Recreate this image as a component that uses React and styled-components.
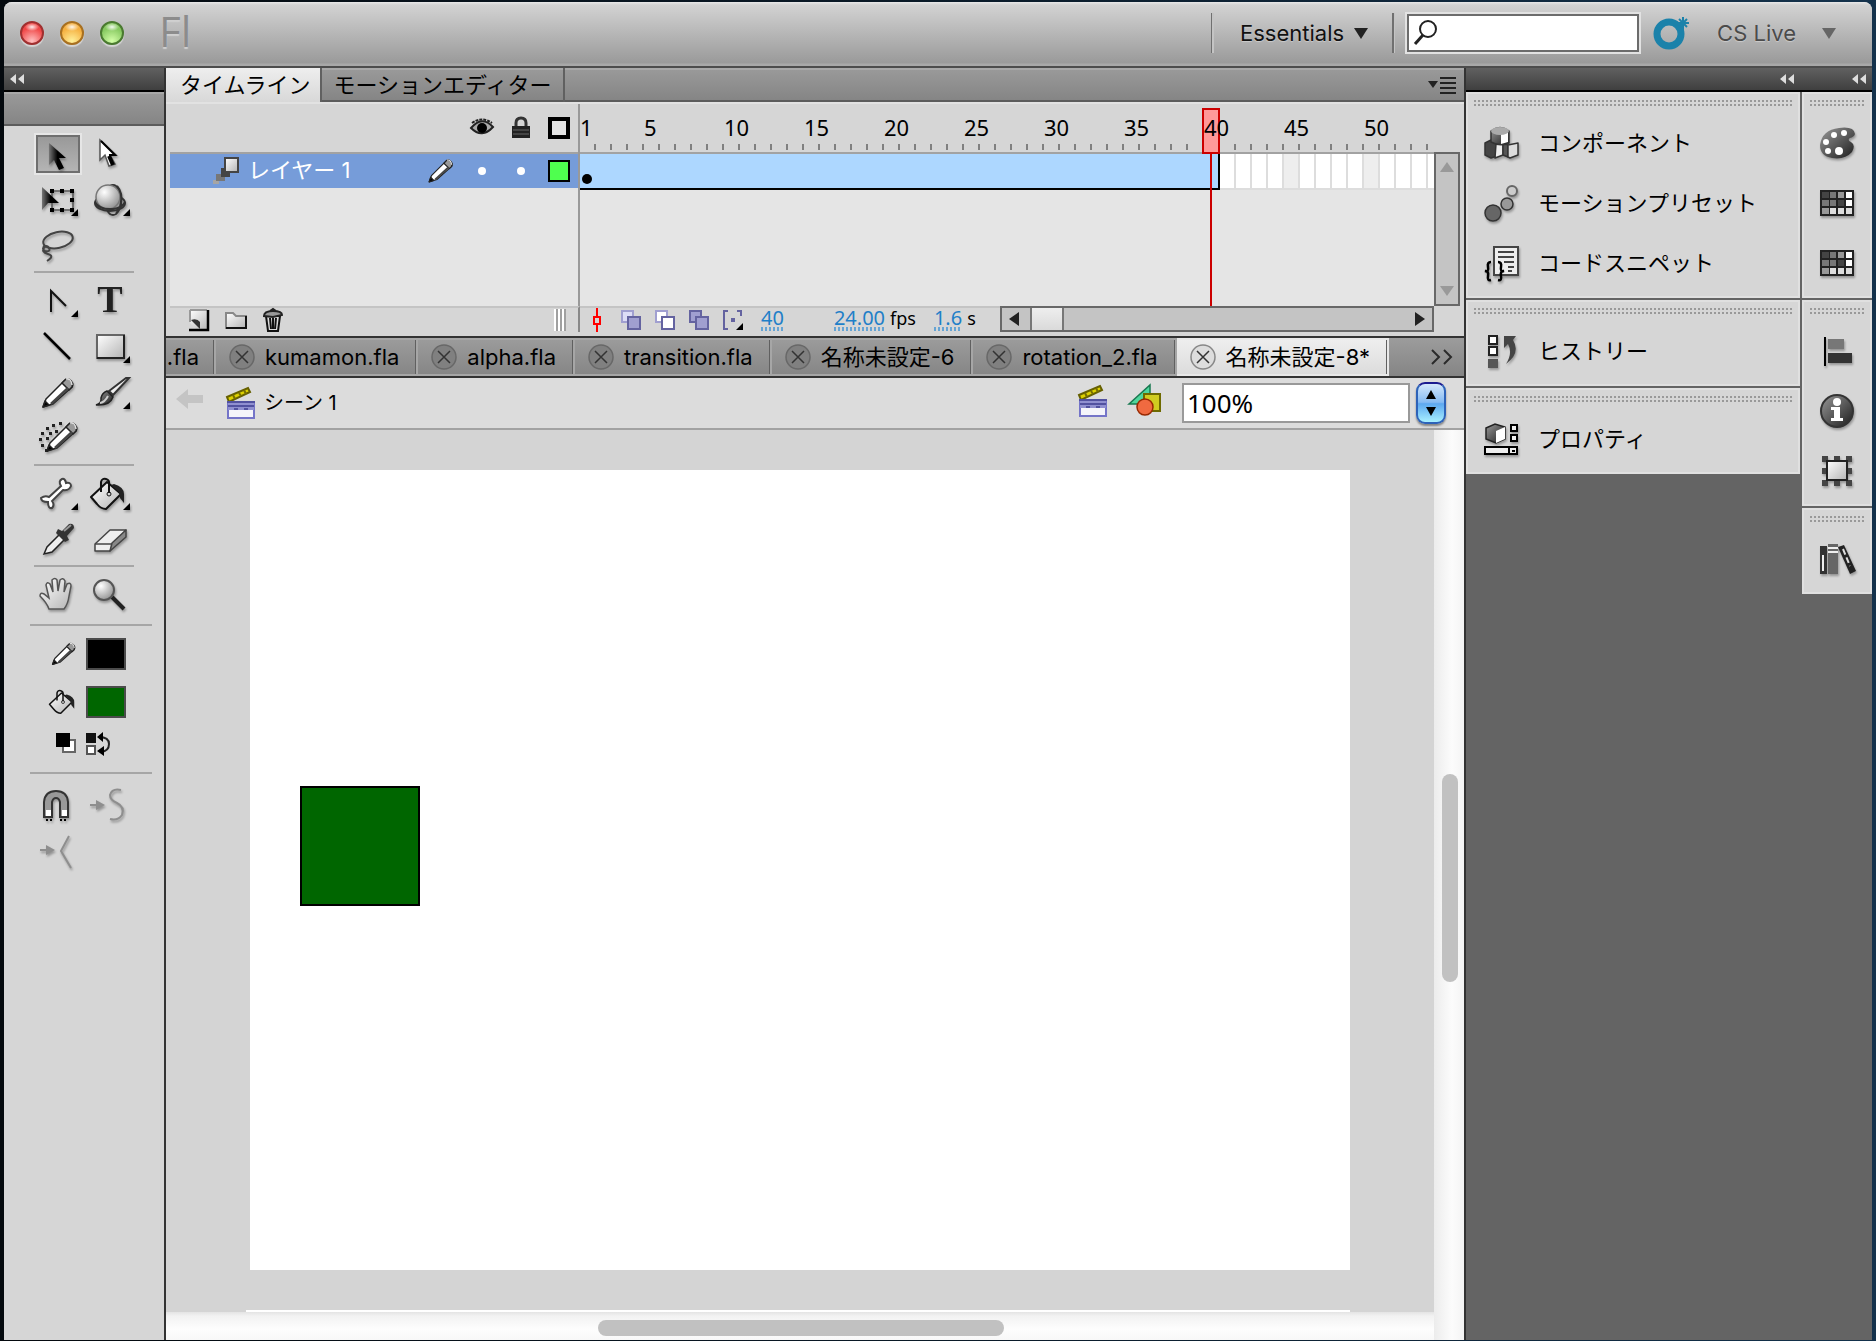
import { useState } from 'react'
import styled, { createGlobalStyle, css } from 'styled-components'

const GlobalStyle = createGlobalStyle`
  * {
    box-sizing: border-box;
  }

  body {
    margin: 0;
    background: #0a1a28;
    color: #000;
    font-family: Inter, 'Noto Sans CJK JP', sans-serif;
    font-size: 22px;
    line-height: 28px;
  }

  button, input {
    margin: 0;
    padding: 0;
    border: 0;
    border-radius: 0;
    background: none;
    color: inherit;
    font: inherit;
  }

  svg {
    display: block;
    flex: none;
    overflow: visible;
  }
`

const Desktop = styled.div`
  min-height: 100vh;
  display: flex;
  padding: 2px 4px 1px;
  background: linear-gradient(90deg, #04090e 0%, #0a1a28 50%, #14324c 100%);
`

const Window = styled.div`
  flex: 1;
  min-width: 0;
  display: flex;
  flex-direction: column;
  border-radius: 8px 8px 0 0;
  overflow: hidden;
  background: #d6d6d6;
`

/* title bar */

const TitleBar = styled.header`
  height: 66px;
  display: flex;
  align-items: center;
  padding: 0 36px 2px 16px;
  border-bottom: 2px solid #4c4c4c;
  background: linear-gradient(#e8e8e8 0, #d2d2d2 3px, #9a9a9a 61px, #a8a8a8 62px);
`

const Lights = styled.div`
  display: flex;
  gap: 16px;
`

const Light = styled.button`
  width: 24px;
  height: 24px;
  border-radius: 50%;
  border: 2px solid ${(p) => p.$edge};
  background:
    radial-gradient(ellipse 7px 4px at 50% 4px, rgba(255, 255, 255, 0.9), transparent),
    radial-gradient(circle at 50% 90%, ${(p) => p.$glow}, ${(p) => p.$color} 65%);
  box-shadow: 0 2px 1px rgba(255, 255, 255, 0.5);
`

const Logo = styled.div`
  margin-left: 35px;
  padding-bottom: 4px;
  flex: 1;
  color: #8c8c8c;
  font-family: 'Open Sans', sans-serif;
  font-size: 42px;
  line-height: 48px;
  text-shadow: 0 2px 1px #d0d0d0;
`

const Rule = styled.span`
  width: 3px;
  height: 40px;
  background: linear-gradient(90deg, #707070 50%, #c4c4c4 50%);
`

const MenuButton = styled.button`
  display: flex;
  align-items: center;
  gap: ${(p) => p.$gap || 10}px;
  color: ${(p) => (p.$dim ? '#4b4b4b' : '#111')};
  text-shadow: 0 1px 1px #ccc;
`

const Essentials = styled(MenuButton)`
  padding: 0 24px 0 26px;
`

const Search = styled.label`
  display: flex;
  align-items: center;
  width: 232px;
  height: 38px;
  margin: 0 14px 0 12px;
  padding-left: 4px;
  border: 2px solid #6c6c6c;
  outline: 2px solid #e2e2e2;
  background: #fff;

  input {
    min-width: 0;
    flex: 1;
    height: 28px;
    outline: 0;
  }
`

/* main columns */

const Columns = styled.div`
  flex: 1;
  display: flex;
  min-height: 0;
`

const DarkHead = styled.div`
  height: 24px;
  display: flex;
  align-items: center;
  border-bottom: 2px solid #000;
  background: linear-gradient(#606060, #3f3f3f);
`

const Collapse = styled.button`
  padding: 0 6px;
`

const ToolPanel = styled.aside`
  width: 162px;
  display: flex;
  flex-direction: column;
  border-right: 2px solid #333;
`

const ToolCap = styled.div`
  height: 34px;
  border-top: 2px solid #a8a8a8;
  border-bottom: 2px solid #5c5c5c;
  background: linear-gradient(#999, #858585);
`

const ToolGroup = styled.div`
  width: 104px;
  margin-left: 27px;
  padding: 5px 0 2px;
  display: grid;
  grid-template-columns: 52px 52px;
  grid-auto-rows: 46px;
`

const ToolRule = styled.hr`
  width: ${(p) => (p.$wide ? 122 : 100)}px;
  height: 2px;
  margin: ${(p) => (p.$wide ? '4px 0 4px 26px' : '0 0 0 30px')};
  border: 0;
  background: #a6a6a6;
`

const Tool = styled.button`
  display: grid;
  place-items: center;

  svg {
    filter: drop-shadow(1px 2px 1px rgba(0, 0, 0, 0.3));
  }

  ${(p) =>
    p.$active &&
    css`
      width: 44px;
      height: 38px;
      margin: 4px 0 0 5px;
      place-self: start;
      border: 2px solid #6f6f6f;
      outline: 2px solid #e6e6e6;
      background: linear-gradient(#999, #b4b4b4);
    `}
`

const ColorGroup = styled.div`
  padding: 0 0 6px 36px;
`

const ColorRow = styled.div`
  display: flex;
  align-items: center;
  gap: ${(p) => p.$gap}px;
  height: ${(p) => p.$height}px;
  padding-left: ${(p) => p.$indent || 0}px;
`

const Swatch = styled.button`
  width: 40px;
  height: 32px;
  border: 2px solid #4b4b4b;
  background: ${(p) => p.$color};
`

/* timeline */

const Center = styled.main`
  flex: 1;
  min-width: 0;
  display: flex;
  flex-direction: column;
`

const PanelTabs = styled.div`
  height: 34px;
  display: flex;
  align-items: center;
  border-top: 2px solid #a8a8a8;
  border-bottom: 2px solid #5c5c5c;
  background: linear-gradient(#999, #858585);
`

const PanelTab = styled.button`
  height: 34px;
  padding: 0 11px;
  border-right: 2px solid #606060;
  white-space: nowrap;
  ${(p) =>
    p.$active &&
    css`
      padding: 0 10px 0 14px;
      background: linear-gradient(#eee, #d8d8d8);
    `}
`

const PanelMenu = styled.button`
  margin-left: auto;
  padding-right: 8px;
`

const Timeline = styled.section`
  display: flex;
  padding: 0 4px;
  height: 204px;
  border-top: 2px solid #e2e2e2;
`

const Layers = styled.div`
  width: 410px;
  border-right: 2px solid #999;
`

const layerGrid = css`
  display: grid;
  grid-template-columns: 1fr 38px 39px 38px;
  align-items: center;
  justify-items: center;
`

const LayerHead = styled.div`
  ${layerGrid}
  height: 50px;
  border-bottom: 2px solid #a2a2a2;
`

const LayerRow = styled.div`
  ${layerGrid}
  height: 34px;
  background: #769cd9;
  color: #fff;
`

const LayerName = styled.div`
  justify-self: stretch;
  display: flex;
  align-items: center;
  padding: 0 8px 0 42px;

  span {
    flex: 1;
    margin-left: 8px;
    padding-bottom: 2px;
  }
`

const Dot = styled.button`
  width: 8px;
  height: 8px;
  border-radius: 50%;
  background: #fff;
`

const Outline = styled.button`
  width: 22px;
  height: 22px;
  border: ${(p) => p.$line}px solid #000;
  background: ${(p) => p.$color};
`

const Empty = styled.div`
  height: 118px;
  background: #e5e5e5;
`

const Frames = styled.div`
  flex: 1;
  min-width: 0;
  position: relative;
  overflow: hidden;
`

const Ruler = styled.div`
  display: flex;
  height: 50px;
  border-bottom: 2px solid #a2a2a2;
`

const Tick = styled.div`
  flex: none;
  width: 16px;
  padding-top: 9px;
  font-family: 'Noto Sans', sans-serif;
  background: linear-gradient(#808080, #808080) 14px 40px / 2px 6px no-repeat;

  /* numbers stay readable above the playhead */
  span {
    position: relative;
    z-index: 1;
  }
`

const FrameRow = styled.div`
  display: flex;
  height: 36px;
  background: #fff;
`

const Span = styled.div`
  flex: none;
  display: flex;
  align-items: flex-end;
  width: ${(p) => p.$length * 16}px;
  padding: 0 2px 4px;
  border-right: 2px solid #000;
  border-bottom: 2px solid #000;
  background: #add7ff;

  &::before {
    content: '';
    width: 10px;
    height: 10px;
    border-radius: 50%;
    background: #000;
  }
`

const Frame = styled.div`
  flex: none;
  width: 16px;
  border-right: 2px solid #ddd;
  border-bottom: 2px solid #ddd;
  background: ${(p) => (p.$fifth ? '#eee' : '#fff')};
`

/* the playhead lies over the ruler and the frames */
const Playhead = styled.div`
  position: absolute;
  top: 4px;
  bottom: 0;
  left: ${(p) => (p.$frame - 1) * 16 - 2}px;
  width: 18px;
  background: linear-gradient(#c00, #c00) 8px 0 / 2px 100% no-repeat;

  &::before {
    content: '';
    display: block;
    height: 42px;
    border: 2px solid #c00;
    background: #f99;
  }
`

const FrameScroll = styled.div`
  align-self: flex-end;
  width: 26px;
  height: 154px;
  display: flex;
  flex-direction: column;
  justify-content: space-between;
  align-items: center;
  padding: 8px 0;
  border: 2px solid #686868;
  background: #c4c4c4;
`

const TimelineBar = styled.footer`
  height: 32px;
  display: flex;
  padding: 0 30px 4px 4px;
  border-bottom: 2px solid #333;
`

const LayerTools = styled.div`
  width: 410px;
  display: flex;
  align-items: center;
  gap: 14px;
  padding: 0 12px 0 18px;
  border-top: 2px solid #c4c4c4;
  border-right: 2px solid #888;
`

const Grip = styled.span`
  width: 12px;
  height: 22px;
  margin-left: auto;
  background: repeating-linear-gradient(90deg, #fff 0 2px, #a0a0a0 2px 4px);
`

const FrameTools = styled.div`
  flex: 1;
  display: flex;
  align-items: center;
  padding-left: 12px;
  border-top: 2px solid #c4c4c4;
  font-family: 'Noto Sans', sans-serif;
  font-size: 18px;
  line-height: 18px;
`

const IconButton = styled.button`
  display: block;
`

const OnionSet = styled.div`
  display: flex;
  gap: 12px;
  margin: 0 17px 0 18px;
`

const Value = styled.button`
  margin-right: ${(p) => p.$gap || 5}px;
  padding-bottom: 4px;
  color: #1f7fc8;
  font-size: 20px;
  background: repeating-linear-gradient(90deg, #66a4d4 0 2px, transparent 2px 4px) bottom / 100% 4px no-repeat;
`

const Unit = styled.span`
  margin-right: 18px;
  padding-bottom: 4px;
`

const HScroll = styled.div`
  width: 434px;
  display: flex;
  align-items: center;
  border: 2px solid #686868;
  background: #c4c4c4;

  button {
    width: 28px;
    height: 100%;
    display: grid;
    place-items: center;
  }

  button:first-child {
    padding-right: 4px;
  }

  button:last-child {
    padding-left: 4px;
  }

  span {
    width: 34px;
    height: 100%;
    margin-right: auto;
    border: 2px solid #777;
    border-width: 0 2px;
    background: linear-gradient(#eee, #dadada);
  }
`

/* document tabs and edit bar */

const DocTabs = styled.nav`
  height: 40px;
  display: flex;
  border-bottom: 2px solid #333;
  background: linear-gradient(#9c9c9c, #858585);
`

const DocTab = styled.div`
  flex: none;
  display: flex;
  align-items: center;
  gap: 10px;
  padding: 0 17px 0 13px;
  border: 2px solid #a6a6a6;
  border-width: 2px 2px 2px 0;
  box-shadow: inset -1px 0 #606060;
  white-space: nowrap;
  ${(p) =>
    p.$active &&
    css`
      border-color: #e8e8e8;
      background: linear-gradient(#eee, #dcdcdc);
    `}
  ${(p) =>
    p.$cut &&
    css`
      width: 50px;
      padding: 0 15px 0 0;
      justify-content: flex-end;
    `}
`

const MoreTabs = styled.button`
  margin-left: auto;
  padding-right: 10px;
`

const EditBar = styled.div`
  height: 52px;
  display: flex;
  align-items: center;
  padding: 0 18px 4px 10px;
  border-bottom: 2px solid #a2a2a2;
  background: #dcdcdc;
  font-size: 20px;
`

const Scene = styled.button`
  display: flex;
  align-items: center;
  gap: 8px;
  margin: 0 auto 0 22px;
  padding-top: 4px;
`

const EditButtons = styled.div`
  display: flex;
  gap: 20px;
`

const Zoom = styled.input`
  width: 228px;
  height: 40px;
  margin: 4px 6px 0 20px;
  padding-left: 3px;
  border: 2px solid #999;
  background: #fff;
  font-family: 'Noto Sans', sans-serif;
  font-size: 26px;
`

const Stepper = styled.button`
  width: 30px;
  height: 42px;
  margin-top: 4px;
  display: grid;
  place-items: center;
  border: 2px solid #2d62b8;
  border-top-color: #1c1c90;
  border-radius: 9px;
  background: linear-gradient(#d4e8fb 0%, #86bbf3 48%, #5da8f0 52%, #a8f0ff 100%);
  box-shadow: 0 2px 2px rgba(0, 0, 0, 0.4);
`

/* stage */

const Work = styled.div`
  flex: 1;
  display: grid;
  grid-template-columns: 1fr 30px;
  grid-template-rows: 1fr 28px;
`

const Pasteboard = styled.div`
  display: flex;
  padding: 40px 84px;
  background: #d4d4d4;
  border-bottom: 2px solid #fff;
  border-image: linear-gradient(90deg, #d4d4d4 82px, #fff 82px calc(100% - 86px), #d4d4d4 calc(100% - 86px)) 2;
`

const Stage = styled.div`
  flex: 1;
  position: relative;
  background: #fff;
`

/* a shape on the free canvas */
const Shape = styled.div`
  position: absolute;
  left: ${(p) => p.$x}px;
  top: ${(p) => p.$y}px;
  width: 120px;
  height: 120px;
  border: 2px solid #000;
  background: #060;
`

const VTrack = styled.div`
  grid-row: span 2;
  display: flex;
  justify-content: center;
  padding: 344px 0 0 2px;
  background: linear-gradient(90deg, #ececec, #fcfcfc 60%, #f4f4f4);

  span {
    width: 16px;
    height: 208px;
    border-radius: 8px;
    background: #c1c1c1;
  }
`

const HTrack = styled.div`
  display: flex;
  align-items: center;
  padding: 4px 0 0 432px;
  background: linear-gradient(#e4e4e4, #f2f2f2 4px, #fdfdfd 60%, #f8f8f8);

  span {
    width: 406px;
    height: 16px;
    border-radius: 8px;
    background: #c1c1c1;
  }
`

/* right docks */

const Docks = styled.aside`
  width: 408px;
  display: flex;
  flex-direction: column;
  border-left: 2px solid #333;
  background: #646464;
`

const DockHead = styled(DarkHead)`
  justify-content: flex-end;
  gap: 46px;
`

const DockColumns = styled.div`
  display: flex;
  align-items: flex-start;
  gap: 2px;
`

const Dock = styled.div`
  display: flex;
  flex-direction: column;
  gap: 2px;
  ${(p) => (p.$narrow ? 'width: 70px;' : 'flex: 1;')}
`

const DockGroup = styled.div`
  padding: 6px 6px 3px;
  border: 2px solid #e0e0e0;
  background: #d6d6d6;

  &::before {
    content: '';
    display: block;
    height: 6px;
    margin-bottom: 7px;
    background:
      linear-gradient(#d6d6d6, #d6d6d6) 0 2px / 100% 2px no-repeat,
      repeating-linear-gradient(90deg, #999 0 2px, #d6d6d6 2px 4px);
  }
`

const DockItem = styled.button`
  width: 100%;
  height: 60px;
  display: flex;
  align-items: center;
  gap: 16px;
  padding-left: ${(p) => (p.$narrow ? 9 : 10)}px;
  white-space: nowrap;

  svg {
    filter: drop-shadow(1px 2px 1px rgba(0, 0, 0, 0.3));
  }
`

const Defs = () => (
  <svg width="0" height="0" aria-hidden="true">
    <defs>
      <linearGradient id="light" x1="0" y1="0" x2="1" y2="1">
        <stop offset="0" stopColor="#fff" />
        <stop offset="1" stopColor="#b4b4b4" />
      </linearGradient>
      <linearGradient id="steel" x1="0" y1="0" x2="1" y2="1">
        <stop offset="0" stopColor="#999" />
        <stop offset="1" stopColor="#1c1c1c" />
      </linearGradient>
      <linearGradient id="ink" x1="0" y1="0" x2="1" y2="0">
        <stop offset="0" stopColor="#777" />
        <stop offset="0.5" stopColor="#000" />
      </linearGradient>
      <radialGradient id="ball" cx="0.35" cy="0.3" r="0.8">
        <stop offset="0" stopColor="#fff" />
        <stop offset="1" stopColor="#8a8a8a" />
      </radialGradient>
    </defs>
  </svg>
)

const Svg = ({ w = 44, h = 40, children, ...rest }) => (
  <svg width={w} height={h} viewBox={`0 0 ${w} ${h}`} fill="none" aria-hidden="true" {...rest}>
    {children}
  </svg>
)

const More = () => <path d="M43 29v7h-7z" fill="#000" />

const Pencil = () => (
  <g stroke="#222" strokeWidth="1.5" strokeLinejoin="round">
    <path d="M8 34l3-8L30 7q3-2 6 1t1 6L18 31z" fill="#fff" />
    <path d="M27 10l4-4q3-1 5 2t1 6l-3 3z" fill="#999" />
    <path d="M31 6q5-1 6 6" fill="none" stroke="#ddd" />
    <path d="M8 34l2-6 4 4z" fill="#000" />
    <path d="M16 31L33 15" strokeWidth="2.5" stroke="#444" />
  </g>
)

const Bucket = () => (
  <g stroke="#111" strokeWidth="2" strokeLinejoin="round">
    <path d="M4 23L20 8l14 12-15 15q-5 0-9-5z" fill="url(#light)" />
    <path d="M14 18V8q1-4 5-3t3 6v8" />
    <circle cx="22" cy="20" r="2" strokeWidth="1" />
    <path d="M27 10q10 3 10 10v9l-4-5-1-6-8-7z" fill="#222" stroke="none" />
  </g>
)

const icons = {
  arrow: <path d="M11 6v22l5-5 5 10 5-2-5-10h7z" fill="url(#ink)" />,
  subArrow: (
    <>
      <path d="M13 6v20l5-5 4 11 6-2-5-9h6z" fill="#fff" stroke="#555" strokeWidth="1.5" />
      <path d="M22 22l4 9" stroke="#000" strokeWidth="4" />
      <path d="M14 7l14 14h-6" stroke="#000" strokeWidth="2" />
    </>
  ),
  transform: (
    <>
      <path d="M17 11h21v19H17z" stroke="#555" strokeWidth="1.5" />
      <path d="M15 9h4v4h-4zM25 9h4v4h-4zM35 9h4v4h-4zM35 18h4v4h-4zM35 28h4v4h-4zM25 28h4v4h-4zM15 28h4v4h-4z" fill="#000" />
      <path d="M7 7v23l6-7h11z" fill="url(#ink)" />
      <More />
    </>
  ),
  sphere: (
    <>
      <ellipse cx="23" cy="23" rx="15" ry="8" stroke="#333" strokeWidth="2" />
      <ellipse cx="26" cy="20" rx="8" ry="15" stroke="#333" strokeWidth="2" />
      <circle cx="21" cy="17" r="12" fill="url(#ball)" stroke="#777" strokeWidth="1.5" />
      <path d="M8 22q4 8 18 7 9-1 12-7M30 6q6 7 4 18-2 7-5 9" stroke="#333" strokeWidth="2" />
      <More />
    </>
  ),
  lasso: (
    <g stroke="#444" strokeWidth="2">
      <ellipse cx="23" cy="14" rx="15" ry="8" transform="rotate(-12 23 14)" />
      <path d="M10 19q-4 4 0 6 6 1 4-3t-5 0 4 6-1 7" />
    </g>
  ),
  pen: (
    <>
      <path d="M16 31V10l15 15" stroke="#111" strokeWidth="2" />
      <More />
    </>
  ),
  text: (
    <text x="23" y="31" textAnchor="middle" fontFamily="Liberation Serif, serif" fontWeight="700" fontSize="38" fill="#222">
      T
    </text>
  ),
  line: <path d="M9 6l26 26" stroke="#000" strokeWidth="2.5" />,
  rect: (
    <>
      <path d="M10 8h27v23H10z" fill="url(#light)" stroke="#666" strokeWidth="2" />
      <path d="M37 8v23H10" stroke="#222" strokeWidth="2" />
      <More />
    </>
  ),
  pencil: <Pencil />,
  brush: (
    <>
      <path d="M42 5L26 22l-4-4L39 5z" fill="#eee" stroke="#333" strokeWidth="2" />
      <path d="M20 18l6 6q-3 9-17 8 6-2 5-7 1-5 6-7z" fill="url(#steel)" stroke="#222" strokeWidth="1.5" />
      <path d="M13 30q5-1 8-7" stroke="#ccc" strokeWidth="2" />
      <More />
    </>
  ),
  deco: (
    <>
      <path d="M6 13h3v3H6zM11 8h3v3h-3zM17 5h3v3h-3zM24 3h3v3h-3zM4 19h3v3H4zM6 25h3v3H6zM10 30h3v3h-3zM14 13h3v3h-3zM20 11h3v3h-3zM11 18h3v3h-3z" fill="#222" />
      <g transform="translate(4 -2)">
        <Pencil />
      </g>
    </>
  ),
  bone: (
    <>
      <path d="M6 24q4-3 8-1L26 12q-3-5 1-7 3-1 4 4 5-1 5 3-2 5-8 4L17 27q3 4 0 7-4 1-4-6-7 0-7-4z" fill="#fff" stroke="#444" strokeWidth="2" />
      <More />
    </>
  ),
  bucket: (
    <>
      <Bucket />
      <More />
    </>
  ),
  dropper: (
    <>
      <path d="M9 34l3-7 14-14 5 5-14 14z" fill="#eee" stroke="#222" strokeWidth="1.5" />
      <path d="M23 9l4 2 7-7q5-1 5 4l-7 8 2 4-4 2-9-9z" fill="#333" />
      <path d="M29 11l7-6" stroke="#999" strokeWidth="2" />
    </>
  ),
  eraser: (
    <g stroke="#444" strokeWidth="1.5" strokeLinejoin="round">
      <path d="M8 24L23 10h16L28 22l-5 9H8z" fill="#eee" />
      <path d="M39 10v7L23 31l2-8z" fill="#888" />
      <path d="M8 24h17" />
    </g>
  ),
  hand: (
    <path
      d="M14 34q-2-6-9-13 0-4 4-2l5 4-3-13q1-4 4-1l3 8-1-12q3-3 5 0l1 11 2-11q3-3 5 1l-1 11 3-8q4-2 4 2l-2 10q-1 8-5 13z"
      fill="url(#light)"
      stroke="#555"
      strokeWidth="1.5"
    />
  ),
  magnifier: (
    <>
      <path d="M25 22l12 12" stroke="#222" strokeWidth="4" />
      <circle cx="17" cy="15" r="10" fill="url(#ball)" stroke="#555" strokeWidth="2" />
    </>
  ),
  magnet: (
    <>
      <path d="M9 31V16q1-11 12-11t12 11v15h-8V16q-1-4-4-4t-4 4v15z" fill="#999" stroke="#333" strokeWidth="2" />
      <path d="M11 24h5v6h-5zM27 24h5v6h-5z" fill="#fff" />
      <path d="M11 33h2v2h-2zM15 33h2v2h-2zM25 33h2v2h-2zM29 33h2v2h-2z" fill="#000" />
    </>
  ),
  smooth: (
    <g stroke="#8e8e8e" strokeWidth="2">
      <path d="M3 19h8" />
      <path d="M9 14l9 5-9 5z" fill="#8e8e8e" stroke="none" />
      <path d="M34 4q-9-2-11 5 0 5 7 8 8 4 5 12-4 6-12 4" />
    </g>
  ),
  straighten: (
    <g stroke="#8e8e8e" strokeWidth="2">
      <path d="M5 18h8" />
      <path d="M11 13l9 5-9 5z" fill="#8e8e8e" stroke="none" />
      <path d="M34 4l-8 15 10 17" />
    </g>
  ),
}

const dockIcons = {
  components: (
    <g stroke="#333" strokeWidth="1.5" strokeLinejoin="round">
      <path d="M1 18l6-3 6 3v13l-6 2-6-3z" fill="#444" />
      <path d="M12 19l7-1v12l-8 3z" fill="#eee" />
      <path d="M19 18l5 2v12l-5-2z" fill="#555" />
      <path d="M24 20l10-2v12l-8 3-2-1z" fill="#ddd" />
      <path d="M7 6q9-7 18 0v12q-9 4-18-1z" fill="url(#steel)" />
      <path d="M17 9l7-2v10l-7 2z" fill="#fff" stroke="none" />
      <ellipse cx="16" cy="6" rx="9" ry="4" fill="#aaa" stroke="none" />
    </g>
  ),
  presets: (
    <g stroke="#333" strokeWidth="1.5">
      <circle cx="28" cy="6" r="5" fill="#ccc" stroke="#666" strokeWidth="2" />
      <circle cx="23" cy="19" r="6" fill="#999" />
      <circle cx="9" cy="28" r="8" fill="#666" />
    </g>
  ),
  snippets: (
    <>
      <path d="M10 2h24v28H10z" fill="#eee" stroke="#444" strokeWidth="2" />
      <path d="M14 7h16M14 12h16M20 17h10M24 22h6M24 26h4" stroke="#444" strokeWidth="2" />
      <path d="M7 17q-4 0-3 5t-3 4q4 0 3 5t3 4M14 17q4 0 3 5t3 4q-4 0-3 5t-3 4" stroke="#000" strokeWidth="2.5" />
    </>
  ),
  history: (
    <>
      <path d="M5 3h8v8H5zM5 14h8v8H5z" fill="#fff" stroke="#222" strokeWidth="2" />
      <path d="M4 26h10v9H4z" fill="#555" />
      <path d="M20 3h12l-3 4q8 13-7 24 7-11 2-20l-4 4z" fill="#444" />
    </>
  ),
  properties: (
    <>
      <path d="M2 7l9-4 10 3v12l-9 4-10-4z" fill="url(#steel)" stroke="#222" strokeWidth="1.5" />
      <path d="M12 10l9-4v12l-9 4z" fill="#fff" />
      <path d="M27 4h6v6h-6zM27 14h6v6h-6zM1 26h32v7H1z" fill="#eee" stroke="#000" strokeWidth="2" />
      <path d="M25 26v7M28 30h3" stroke="#000" strokeWidth="2" />
    </>
  ),
  color: (
    <>
      <path d="M1 20Q3 5 20 3q15-2 16 6-1 3-5 4-3 2 1 4 5 3 1 10-7 8-20 6Q1 31 1 20z" fill="url(#steel)" />
      <g fill="#fff">
        <circle cx="25" cy="8" r="3" />
        <circle cx="15" cy="10" r="3" />
        <circle cx="7" cy="17" r="3" />
        <circle cx="9" cy="26" r="3" />
        <circle cx="20" cy="26" r="4" />
      </g>
    </>
  ),
  swatches: (
    <>
      <path d="M1 5h34v26H1z" fill="#222" />
      <path d="M3 7h7v6H3zM19 15h6v6h-6z" fill="#444" />
      <path d="M11 7h6v6h-6zM3 15h7v6H3zM11 15h6v6h-6z" fill="#777" />
      <path d="M19 7h6v6h-6zM3 23h7v6H3z" fill="#999" />
      <path d="M11 23h6v6h-6zM19 23h6v6h-6zM27 23h6v6h-6z" fill="#ddd" />
      <path d="M27 7h6v6h-6zM27 15h6v6h-6z" fill="#fff" />
    </>
  ),
  align: (
    <>
      <path d="M5 4h2v29H5z" fill="#000" />
      <path d="M9 6h16v10H9z" fill="#777" />
      <path d="M9 20h24v10H9z" fill="#333" />
    </>
  ),
  info: (
    <>
      <circle cx="18" cy="18" r="16" fill="url(#steel)" stroke="#333" strokeWidth="2" />
      <circle cx="18" cy="9" r="4" fill="#fff" />
      <path d="M12 14h9v11h3v3H12v-3h3v-8h-3z" fill="#fff" />
    </>
  ),
  transform: (
    <>
      <path d="M3 3h6v6H3zM15 3h6v6h-6zM27 3h6v6h-6zM3 15h6v6H3zM27 15h6v6h-6zM3 27h6v6H3zM15 27h6v6h-6zM27 27h6v6h-6z" fill="#444" />
      <path d="M8 8h20v19H8z" fill="url(#light)" stroke="#222" strokeWidth="2" />
    </>
  ),
  library: (
    <>
      <path d="M1 5h7v28H1z" fill="#333" />
      <path d="M9 3h10v30H9z" fill="#666" />
      <path d="M9 7h10M9 11h10M4 14v16" stroke="#eee" strokeWidth="2" />
      <path d="M19 6l6-2 12 26-6 3z" fill="#222" />
      <path d="M24 8l7 17" stroke="#ddd" strokeWidth="2" strokeDasharray="6 3" />
    </>
  ),
}

const DownIcon = ({ color = '#222' }) => (
  <Svg w={14} h={12}>
    <path d="M0 1h14L7 12z" fill={color} />
  </Svg>
)

const DoubleLeft = () => (
  <Svg w={14} h={12}>
    <path d="M6 1v10L0 6zM14 1v10L8 6z" fill="#ddd" />
  </Svg>
)

const CloseIcon = ({ active }) => (
  <Svg w={26} h={26}>
    <circle cx="13" cy="13" r="12" fill={active ? '#ddd' : '#808080'} stroke={active ? '#888' : '#686868'} strokeWidth="1.5" />
    <path d="M7 7l12 12M19 7L7 19" stroke="#333" strokeWidth="1.5" />
  </Svg>
)

const Clapper = () => (
  <Svg w={30} h={34}>
    <path d="M1 11L22 2l2 4L3 16z" fill="#dcd000" stroke="#666000" strokeWidth="2" />
    <path d="M7 9l2 4M13 7l2 3M18 4l2 4" stroke="#776e00" strokeWidth="2" />
    <path d="M2 16h26v16H2z" fill="#f4f4fa" stroke="#7474c8" strokeWidth="2" />
    <path d="M2 16h26v8H2z" fill="#9090d0" />
    <path d="M1 16h28M2 20h26M8 23h4M18 23h4" stroke="#5252a0" strokeWidth="2" />
  </Svg>
)

const SymbolsIcon = () => (
  <Svg w={34} h={34}>
    <path d="M1 20L22 1v19z" fill="#4fd69c" stroke="#187850" strokeWidth="1.5" />
    <path d="M16 10h16v17H16z" fill="#d0cc20" stroke="#6e6a00" strokeWidth="2" />
    <circle cx="17" cy="23" r="8" fill="#f06a40" stroke="#982800" strokeWidth="1.5" />
  </Svg>
)

const onionIcons = [
  { name: 'Onion skin', back: '#dcdcf6', front: '#a09fd0', backLine: '#a09fd0' },
  { name: 'Onion skin outlines', back: '#fff', front: '#fff', backLine: '#a09fd0' },
  { name: 'Edit multiple frames', back: '#a09fd0', front: '#a09fd0', backLine: '#6463a0' },
]

const toolGroups = [
  ['arrow', 'subArrow', 'transform', 'sphere', 'lasso'],
  ['pen', 'text', 'line', 'rect', 'pencil', 'brush', 'deco'],
  ['bone', 'bucket', 'dropper', 'eraser'],
  ['hand', 'magnifier'],
]

const docs = ['kumamon.fla', 'alpha.fla', 'transition.fla', '名称未設定-6', 'rotation_2.fla', '名称未設定-8*']

const docks = [
  [
    { icon: 'components', label: 'コンポーネント' },
    { icon: 'presets', label: 'モーションプリセット' },
    { icon: 'snippets', label: 'コードスニペット' },
  ],
  [{ icon: 'history', label: 'ヒストリー' }],
  [{ icon: 'properties', label: 'プロパティ' }],
]

const iconDocks = [['color', 'swatches', 'swatches'], ['align', 'info', 'transform'], ['library']]

const frames = Array.from({ length: 54 }, (_, i) => i + 1)
const spanLength = 40

function Toolbox() {
  const [tool, setTool] = useState('arrow')

  return (
    <ToolPanel>
      <DarkHead>
        <Collapse aria-label="Collapse tools"><DoubleLeft /></Collapse>
      </DarkHead>
      <ToolCap />
      {toolGroups.map((group, i) => (
        <div key={i}>
          {i > 0 && <ToolRule />}
          <ToolGroup>
            {group.map((name) => (
              <Tool key={name} $active={tool === name} aria-label={name} onClick={() => setTool(name)}>
                <Svg>{icons[name]}</Svg>
              </Tool>
            ))}
          </ToolGroup>
        </div>
      ))}
      <ToolRule $wide />
      <ColorGroup>
        <ColorRow $height={48} $gap={6} $indent={6}>
          <Svg w={34} h={30} viewBox="0 0 44 40"><Pencil /></Svg>
          <Swatch $color="#000" aria-label="Stroke color" />
        </ColorRow>
        <ColorRow $height={48} $gap={6} $indent={6}>
          <Svg w={34} h={30} viewBox="0 0 44 40"><Bucket /></Svg>
          <Swatch $color="#060" aria-label="Fill color" />
        </ColorRow>
        <ColorRow $height={36} $gap={8} $indent={15}>
          <IconButton aria-label="Black and white">
            <Svg w={22} h={24}>
              <path d="M8 8h12v12H8z" fill="#fff" stroke="#666" strokeWidth="2" />
              <path d="M1 1h14v14H1z" fill="#000" />
            </Svg>
          </IconButton>
          <IconButton aria-label="Swap colors">
            <Svg w={26} h={24}>
              <path d="M1 1h10v10H1z" fill="#111" />
              <path d="M2 14h8v8H2z" fill="#fff" stroke="#555" strokeWidth="2" />
              <path d="M14 5q10 0 10 7t-8 8" stroke="#222" strokeWidth="2" />
              <path d="M12 5l6-5v10zM12 19l7-5v10z" fill="#000" />
            </Svg>
          </IconButton>
        </ColorRow>
      </ColorGroup>
      <ToolRule $wide />
      <ToolGroup>
        {['magnet', 'smooth', 'straighten'].map((name) => (
          <Tool key={name} aria-label={name}>
            <Svg>{icons[name]}</Svg>
          </Tool>
        ))}
      </ToolGroup>
    </ToolPanel>
  )
}

function TimelinePanel() {
  return (
    <>
      <PanelTabs>
        <PanelTab $active>タイムライン</PanelTab>
        <PanelTab>モーションエディター</PanelTab>
        <PanelMenu aria-label="Panel menu">
          <Svg w={28} h={18}>
            <path d="M0 5h10l-5 7z" fill="#222" />
            <path d="M12 2h16M12 7h16M12 12h16M12 17h16" stroke="#222" strokeWidth="2" />
          </Svg>
        </PanelMenu>
      </PanelTabs>
      <Timeline>
        <Layers>
          <LayerHead>
            <span />
            <Svg w={24} h={20}>
              <path d="M1 10Q12-3 23 9 12 21 1 10z" fill="#aaa" stroke="#222" strokeWidth="2" />
              <circle cx="12" cy="10" r="5" fill="#000" />
              <path d="M2 5q10-7 20 0" stroke="#222" strokeWidth="2" strokeDasharray="3 1" />
            </Svg>
            <Svg w={20} h={24}>
              <path d="M5 11V7q0-5 5-5t5 5v4" stroke="#333" strokeWidth="3" />
              <path d="M1 10h18v12H1z" fill="#222" />
              <path d="M2 14h16M2 18h16" stroke="#666" />
            </Svg>
            <Outline $line={4} $color="#e4e4e4" aria-label="Show outlines" />
          </LayerHead>
          <LayerRow>
            <LayerName>
              <Svg w={28} h={30}>
                <path d="M1 24h6v4H1z" fill="#a5a5a5" />
                <path d="M4 18h9v7H4z" fill="#777" />
                <path d="M9 12h9v9H9z" fill="#444" />
                <path d="M13 2h13v14H13z" fill="url(#light)" stroke="#444" strokeWidth="2" />
              </Svg>
              <span>レイヤー 1</span>
              <Svg w={30} h={28} viewBox="3 2 38 36"><Pencil /></Svg>
            </LayerName>
            <Dot aria-label="Show layer" />
            <Dot aria-label="Lock layer" />
            <Outline $line={2} $color="#4fff4f" aria-label="Layer outline color" />
          </LayerRow>
          <Empty />
        </Layers>
        <Frames>
          <Ruler>
            {frames.map((n) => (
              <Tick key={n}>{(n === 1 || n % 5 === 0) && <span>{n}</span>}</Tick>
            ))}
          </Ruler>
          <FrameRow>
            <Span $length={spanLength} />
            {frames.slice(spanLength).map((n) => (
              <Frame key={n} $fifth={n % 5 === 0} />
            ))}
          </FrameRow>
          <Empty />
          <Playhead $frame={40} />
        </Frames>
        <FrameScroll>
          <Svg w={14} h={10}><path d="M0 10h14L7 0z" fill="#999" /></Svg>
          <Svg w={14} h={10}><path d="M0 0h14L7 10z" fill="#999" /></Svg>
        </FrameScroll>
      </Timeline>
      <TimelineBar>
        <LayerTools>
          <IconButton aria-label="New layer">
            <Svg w={22} h={22}>
              <path d="M2 1h18v20H9L2 14z" fill="url(#light)" />
              <path d="M2 1v12M2 1h17" stroke="#999" strokeWidth="2" />
              <path d="M20 1v20H1" stroke="#000" strokeWidth="2.5" />
              <path d="M3 11q6-2 9 2v7L3 11z" fill="#333" />
            </Svg>
          </IconButton>
          <IconButton aria-label="New folder">
            <Svg w={24} h={20}>
              <path d="M2 3h7l3 3h10v12H2z" fill="url(#light)" stroke="#888" strokeWidth="2" />
              <path d="M22 6v12H2" stroke="#111" strokeWidth="2" />
            </Svg>
          </IconButton>
          <IconButton aria-label="Delete layer">
            <Svg w={22} h={24}>
              <path d="M4 8h14l-2 15H6z" fill="#ddd" stroke="#111" strokeWidth="2" />
              <path d="M8 10l1 11M11 10v11M14 10l-1 11" stroke="#111" strokeWidth="2" />
              <path d="M2 8q0-5 9-5t9 4l-9 2zM8 3l3-2 3 2" fill="#999" stroke="#222" strokeWidth="2" />
            </Svg>
          </IconButton>
          <Grip />
        </LayerTools>
        <FrameTools>
          <IconButton aria-label="Center frame">
            <Svg w={10} h={24}>
              <path d="M5 0v9M5 16v8M2 9h6v7H2z" stroke="#f00" strokeWidth="2" />
            </Svg>
          </IconButton>
          <OnionSet>
            {onionIcons.map((o) => (
              <IconButton key={o.name} aria-label={o.name}>
                <Svg w={22} h={22}>
                  <path d="M2 2h11v11H2z" fill={o.back} stroke={o.backLine} strokeWidth="2" />
                  <path d="M8 8h12v12H8z" fill={o.front} stroke="#6463a0" strokeWidth="2" />
                </Svg>
              </IconButton>
            ))}
            <IconButton aria-label="Modify markers">
              <Svg w={22} h={22}>
                <path d="M6 2H2v5M15 2h4v5M2 14v6h4" stroke="#6463a0" strokeWidth="2" />
                <path d="M2 7v8" stroke="#6463a0" strokeWidth="2" />
                <path d="M9 9h4v4H9z" fill="#6463a0" />
                <path d="M21 14v7h-7z" fill="#000" />
              </Svg>
            </IconButton>
          </OnionSet>
          <Value $gap={50}>40</Value>
          <Value>24.00</Value>
          <Unit>fps</Unit>
          <Value>1.6</Value>
          <Unit>s</Unit>
        </FrameTools>
        <HScroll>
          <button aria-label="Scroll left">
            <Svg w={10} h={14}><path d="M10 0v14L0 7z" fill="#222" /></Svg>
          </button>
          <span />
          <button aria-label="Scroll right">
            <Svg w={10} h={14}><path d="M0 0v14l10-7z" fill="#222" /></Svg>
          </button>
        </HScroll>
      </TimelineBar>
    </>
  )
}

function Documents() {
  return (
    <DocTabs>
      <DocTab $cut>
        <button>.fla</button>
      </DocTab>
      {docs.map((name, i) => {
        const active = i === docs.length - 1
        return (
          <DocTab key={name} $active={active}>
            <IconButton aria-label={`Close ${name}`}><CloseIcon active={active} /></IconButton>
            <button>{name}</button>
          </DocTab>
        )
      })}
      <MoreTabs aria-label="More documents">
        <Svg w={24} h={18}>
          <path d="M2 2l7 7-7 7M14 2l7 7-7 7" stroke="#2a2a2a" strokeWidth="2" />
        </Svg>
      </MoreTabs>
    </DocTabs>
  )
}

function App() {
  return (
    <Desktop>
      <GlobalStyle />
      <Window>
        <TitleBar>
          <Lights>
            <Light $edge="#a03030" $color="#f04848" $glow="#ffc0c0" aria-label="Close" />
            <Light $edge="#a87020" $color="#f5b040" $glow="#fff09a" aria-label="Minimize" />
            <Light $edge="#4a7a30" $color="#86c860" $glow="#d4ffa8" aria-label="Zoom window" />
          </Lights>
          <Logo>Fl</Logo>
          <Rule />
          <Essentials>Essentials <DownIcon /></Essentials>
          <Rule />
          <Search aria-label="Search">
            <Svg w={26} h={28}>
              <circle cx="15" cy="10" r="8" stroke="#222" strokeWidth="2" />
              <path d="M10 16L2 25" stroke="#222" strokeWidth="3" />
            </Svg>
            <input type="text" aria-label="Search" />
          </Search>
          <MenuButton $dim $gap={26}>
            <Svg w={38} h={34}>
              <circle cx="16" cy="18" r="12" stroke="#1b82aa" strokeWidth="7" />
              <path d="M30 1v13M24 7h12M26 3l8 8M34 3l-8 8" stroke="#1b82aa" strokeWidth="2" />
            </Svg>
            CS Live
            <DownIcon color="#666" />
          </MenuButton>
        </TitleBar>
        <Columns>
          <Toolbox />
          <Center>
            <TimelinePanel />
            <Documents />
            <EditBar>
              <IconButton aria-label="Back">
                <Svg w={28} h={28}>
                  <path d="M0 12L12 2v6h15v8H12v6z" fill="#c4c4c4" />
                </Svg>
              </IconButton>
              <Scene><Clapper />シーン 1</Scene>
              <EditButtons>
                <IconButton aria-label="Edit scene"><Clapper /></IconButton>
                <IconButton aria-label="Edit symbols"><SymbolsIcon /></IconButton>
              </EditButtons>
              <Zoom type="text" defaultValue="100%" aria-label="Zoom" />
              <Stepper aria-label="Zoom presets">
                <Svg w={12} h={28}>
                  <path d="M6 1l5 9H1zM6 27l5-9H1z" fill="#000" />
                </Svg>
              </Stepper>
            </EditBar>
            <Work>
              <Pasteboard>
                <Stage>
                  <Shape $x={50} $y={316} />
                </Stage>
              </Pasteboard>
              <VTrack><span /></VTrack>
              <HTrack><span /></HTrack>
            </Work>
          </Center>
          <Docks>
            <DockHead>
              <Collapse aria-label="Expand panels"><DoubleLeft /></Collapse>
              <Collapse aria-label="Expand icons"><DoubleLeft /></Collapse>
            </DockHead>
            <DockColumns>
              <Dock>
                {docks.map((group, i) => (
                  <DockGroup key={i}>
                    {group.map((item) => (
                      <DockItem key={item.icon}>
                        <Svg w={38} h={36}>{dockIcons[item.icon]}</Svg>
                        {item.label}
                      </DockItem>
                    ))}
                  </DockGroup>
                ))}
              </Dock>
              <Dock $narrow>
                {iconDocks.map((group, i) => (
                  <DockGroup key={i}>
                    {group.map((name, j) => (
                      <DockItem key={j} $narrow aria-label={name}>
                        <Svg w={38} h={36}>{dockIcons[name]}</Svg>
                      </DockItem>
                    ))}
                  </DockGroup>
                ))}
              </Dock>
            </DockColumns>
          </Docks>
        </Columns>
        <Defs />
      </Window>
    </Desktop>
  )
}

export default App
